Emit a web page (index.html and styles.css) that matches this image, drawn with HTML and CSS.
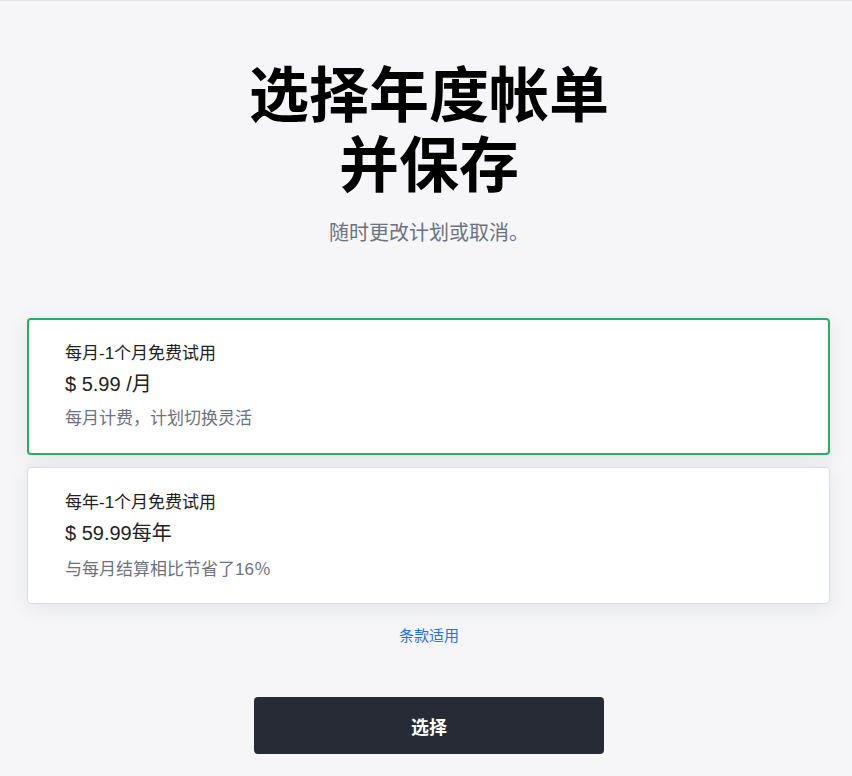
FILE: index.html
```html
<!DOCTYPE html>
<html>
<head>
  <meta charset="utf-8">
  <title>选择年度帐单</title>
  <link rel="stylesheet" href="styles.css">
</head>
<body>
  <div class="page">
    <h1 class="title">选择年度帐单<br>并保存</h1>
    <p class="subtitle">随时更改计划或取消。</p>

    <div class="plans">
      <div class="plan selected">
        <div class="plan-name">每月-1个月免费试用</div>
        <div class="plan-price">$ 5.99 /月</div>
        <div class="plan-note">每月计费，计划切换灵活</div>
      </div>
      <div class="plan">
        <div class="plan-name">每年-1个月免费试用</div>
        <div class="plan-price">$ 59.99每年</div>
        <div class="plan-note">与每月结算相比节省了16<span class="cjk">％</span></div>
      </div>
    </div>

    <a href="#" class="terms">条款适用</a>

    <button class="choose">选择</button>
  </div>
</body>
</html>
```

FILE: styles.css
```css
body {
  margin: 0;
  background: #f6f6f8;
  border-top: 1px solid #e4e4e8;
  font-family: "Liberation Sans", "Noto Sans CJK SC", sans-serif;
  color: #222;
}
.page {
  display: flex;
  flex-direction: column;
  align-items: center;
  padding: 61px 0 0 6px;
}
.title {
  margin: 0;
  font-size: 60px;
  line-height: 70px;
  font-weight: 700;
  color: #000;
  text-align: center;
}
.subtitle {
  margin: 18px 0 0;
  font-size: 20px;
  line-height: 26px;
  color: #6b7280;
}
.plans {
  align-self: stretch;
  margin: 72px 22px 0 21px;
  display: flex;
  flex-direction: column;
  gap: 12px;
}
.plan {
  background: #fff;
  border: 1px solid #d9dce3;
  border-radius: 4px;
  padding: 23px 37px;
  height: 137px;
  box-sizing: border-box;
  box-shadow: 0 4px 20px rgba(30, 35, 60, 0.08);
}
.plan.selected {
  border: 2px solid #27ae60;
  padding: 22px 36px;
}
.plan-name {
  font-size: 17px;
  line-height: 24px;
  color: #222;
}
.plan-price {
  margin-top: 5px;
  font-size: 20px;
  line-height: 26px;
  color: #222;
}
.plan-note {
  margin-top: 10px;
  font-size: 17px;
  line-height: 24px;
  color: #6b7280;
}
.cjk {
  font-family: "Noto Sans CJK SC", sans-serif;
}
.terms {
  margin-top: 22px;
  font-size: 15px;
  line-height: 20px;
  color: #1a73e8;
  text-decoration: none;
}
.choose {
  margin-top: 51px;
  width: 350px;
  height: 57px;
  border: none;
  border-radius: 4px;
  background: #272b35;
  color: #fff;
  font-family: inherit;
  font-size: 18px;
  font-weight: 700;
  cursor: pointer;
}
```
